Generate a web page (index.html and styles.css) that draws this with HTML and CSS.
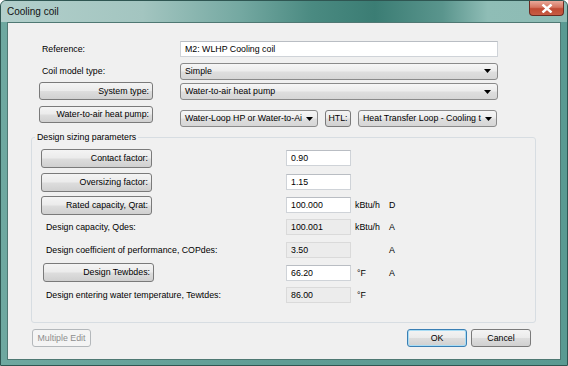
FILE: index.html
```html
<!DOCTYPE html>
<html>
<head>
	<title>Cooling coil</title>
	<link rel="stylesheet" href="styles.css">
</head>
<body>

<div class="ventana">
	<div class="titulo">
		<span class="titulo-texto">Cooling coil</span>
		<div class="cerrar">
			<svg width="12" height="9" viewBox="0 0 12 9"><path d="M1.5 0.5L10.5 8.5M10.5 0.5L1.5 8.5" stroke="#fff" stroke-width="2.4" fill="none"/></svg>
		</div>
	</div>

	<div class="cliente">
		<div class="fila fila-ref">
			<div class="col-izq"><span class="etiqueta">Reference:</span></div>
			<div class="campo campo-largo">M2: WLHP Cooling coil</div>
		</div>

		<div class="fila fila-modelo">
			<div class="col-izq"><span class="etiqueta">Coil model type:</span></div>
			<div class="combo combo-largo"><span class="combo-texto">Simple</span><svg class="flecha" width="7" height="4" viewBox="0 0 7 4"><path d="M0 0h7L3.5 4z"/></svg></div>
		</div>

		<div class="fila fila-sistema">
			<div class="col-izq"><div class="boton boton-etiqueta">System type:</div></div>
			<div class="combo combo-largo"><span class="combo-texto">Water-to-air heat pump</span><svg class="flecha" width="7" height="4" viewBox="0 0 7 4"><path d="M0 0h7L3.5 4z"/></svg></div>
		</div>

		<div class="fila fila-bomba">
			<div class="col-izq"><div class="boton boton-etiqueta">Water-to-air heat pump:</div></div>
			<div class="combo combo-corto"><span class="combo-texto">Water-Loop HP or Water-to-Ai</span><svg class="flecha" width="7" height="4" viewBox="0 0 7 4"><path d="M0 0h7L3.5 4z"/></svg></div>
			<div class="boton boton-htl">HTL:</div>
			<div class="combo combo-htl"><span class="combo-texto">Heat Transfer Loop - Cooling t</span><svg class="flecha" width="7" height="4" viewBox="0 0 7 4"><path d="M0 0h7L3.5 4z"/></svg></div>
		</div>

		<fieldset class="grupo">
			<legend>Design sizing parameters</legend>
			<div class="rejilla">
				<div class="celda"><div class="boton boton-param">Contact factor:</div></div>
				<div class="celda"><div class="campo campo-num">0.90</div></div>
				<div class="celda"></div>
				<div class="celda"></div>

				<div class="celda"><div class="boton boton-param">Oversizing factor:</div></div>
				<div class="celda"><div class="campo campo-num">1.15</div></div>
				<div class="celda"></div>
				<div class="celda"></div>

				<div class="celda"><div class="boton boton-param">Rated capacity, Qrat:</div></div>
				<div class="celda"><div class="campo campo-num">100.000</div></div>
				<div class="celda unidad">kBtu/h</div>
				<div class="celda">D</div>

				<div class="celda"><span class="etiqueta-param">Design capacity, Qdes:</span></div>
				<div class="celda"><div class="campo campo-num solo-lectura">100.001</div></div>
				<div class="celda unidad">kBtu/h</div>
				<div class="celda">A</div>

				<div class="celda"><span class="etiqueta-param">Design coefficient of performance, COPdes:</span></div>
				<div class="celda"><div class="campo campo-num solo-lectura">3.50</div></div>
				<div class="celda unidad"></div>
				<div class="celda">A</div>

				<div class="celda"><div class="boton boton-param boton-tewb">Design Tewbdes:</div></div>
				<div class="celda"><div class="campo campo-num">66.20</div></div>
				<div class="celda unidad grados">&deg;F</div>
				<div class="celda">A</div>

				<div class="celda"><span class="etiqueta-param">Design entering water temperature, Tewtdes:</span></div>
				<div class="celda"><div class="campo campo-num solo-lectura">86.00</div></div>
				<div class="celda unidad grados">&deg;F</div>
				<div class="celda"></div>
			</div>
		</fieldset>

		<div class="pie">
			<div class="boton boton-pie deshabilitado">Multiple Edit</div>
			<div class="pie-derecha">
				<div class="boton boton-pie boton-ok">OK</div>
				<div class="boton boton-pie">Cancel</div>
			</div>
		</div>
	</div>
</div>

</body>
</html>
```

FILE: styles.css
```css
html, body {
	margin: 0;
	padding: 0;
}

body {
	background-color: #ffffff;
	font-family: "Liberation Sans", Arial, sans-serif;
	font-size: 8.8px;
	color: #000;
}

div.ventana {
	width: 568px;
	height: 366px;
	box-sizing: border-box;
	border: 1px solid #2f5652;
	border-radius: 6px 6px 0 0;
	background: linear-gradient(90deg, #6ea8a0 0%, #5f9d95 50%, #5a9a92 100%);
	display: flex;
	flex-direction: column;
	overflow: hidden;
}

div.titulo {
	height: 21px;
	display: flex;
	align-items: flex-start;
	padding: 0 3px 0 6px;
	background: linear-gradient(90deg, #b2cfcb 0%, #a3c5c0 25%, #75a9a2 42%, #4a8a81 55%, #3b7d74 66%, #5a958d 78%, #8fbdb6 86%, #8dbbb4 100%);
}

span.titulo-texto {
	font-size: 10px;
	line-height: 21px;
	color: #111;
}

div.cerrar {
	margin-left: auto;
	width: 35px;
	height: 15px;
	box-sizing: border-box;
	border: 1px solid #6b2b22;
	border-top: none;
	border-radius: 0 0 4px 4px;
	background: linear-gradient(180deg, #e9a99a 0%, #d57560 45%, #c04a33 55%, #c75c44 100%);
	display: flex;
	align-items: center;
	justify-content: center;
}

div.cliente {
	margin: 0 6px;
	height: 338px;
	box-sizing: border-box;
	border: 1px solid #4f7873;
	background-color: #f0f0f0;
	padding-top: 18px;
}

div.fila {
	display: flex;
	align-items: center;
}

div.col-izq {
	width: 172px;
	flex-shrink: 0;
	padding-left: 34px;
	box-sizing: border-box;
}

div.fila-ref {
	height: 16px;
}

div.fila-modelo {
	height: 16px;
	margin-top: 6px;
}

div.fila-sistema {
	height: 18px;
	margin-top: 3px;
}

div.fila-sistema div.col-izq,
div.fila-bomba div.col-izq {
	padding-left: 31px;
}

div.fila-bomba {
	height: 21px;
	margin-top: 6px;
	align-items: flex-end;
}

div.fila-bomba div.col-izq {
	align-self: flex-start;
}

div.campo {
	height: 16px;
	box-sizing: border-box;
	border: 1px solid #cfd3d8;
	border-top-color: #b9bdc3;
	background-color: #fff;
	line-height: 14px;
	padding-left: 4px;
	white-space: nowrap;
	overflow: hidden;
}

div.campo-largo {
	width: 318px;
}

div.combo {
	height: 17px;
	box-sizing: border-box;
	border: 1px solid #8a8a8a;
	border-radius: 3px;
	background: linear-gradient(180deg, #f6f6f6 0%, #ececec 48%, #dedede 52%, #d6d6d6 100%);
	display: flex;
	align-items: center;
	padding: 0 6px 0 4px;
}

div.combo span.combo-texto {
	flex: 1;
	white-space: nowrap;
	line-height: 15px;
}

div.combo svg.flecha {
	flex-shrink: 0;
	margin-left: 4px;
}

div.combo-largo {
	width: 318px;
}

div.fila-sistema div.combo {
	margin-top: 1px;
}

div.combo-corto {
	width: 138px;
}

div.combo-htl {
	width: 139px;
}

div.boton {
	height: 18px;
	box-sizing: border-box;
	border: 1px solid #7a7a7a;
	border-radius: 3px;
	background: linear-gradient(180deg, #f4f4f4 0%, #ebebeb 48%, #dddddd 52%, #d0d0d0 100%);
	line-height: 16px;
	white-space: nowrap;
}

div.boton-etiqueta {
	width: 114px;
	text-align: right;
	padding-right: 3px;
}

div.fila-bomba div.boton-etiqueta {
	height: 17px;
	line-height: 15px;
}

div.boton-htl {
	width: 26px;
	height: 17px;
	line-height: 15px;
	text-align: center;
	margin: 0 7px 0 7px;
}

fieldset.grupo {
	margin: 5px 0 0 23px;
	width: 505px;
	box-sizing: border-box;
	border: 1px solid #d7dde2;
	border-radius: 3px;
	padding: 3px 0 16px 0;
}

fieldset.grupo legend {
	padding: 0 2px;
	margin-left: 3px;
	line-height: 11px;
	font-size: 8.8px;
}

div.rejilla {
	display: grid;
	grid-template-columns: 254px 65px 38px 30px;
	grid-template-rows: 24px 24px 22px 22px 23px 23px 22px;
}

div.rejilla div.celda {
	display: flex;
	align-items: center;
	white-space: nowrap;
}

div.rejilla div.unidad {
	padding-left: 4px;
}

div.rejilla div.grados {
	padding-left: 6px;
}

div.boton-param {
	width: 111px;
	height: 19px;
	line-height: 17px;
	margin-left: 9px;
	text-align: right;
	padding-right: 3px;
}

div.boton-tewb {
	margin-left: 11px;
}

span.etiqueta-param {
	padding-left: 14px;
}

div.campo-num {
	width: 65px;
}

div.solo-lectura {
	background-color: #ececec;
	border-color: #dadada;
}

div.pie {
	display: flex;
	margin-top: 6px;
	padding: 0 29px 0 24px;
}

div.pie-derecha {
	margin-left: auto;
	display: flex;
	gap: 4px;
}

div.boton-pie {
	width: 60px;
	height: 18px;
	text-align: center;
}

div.deshabilitado {
	width: 59px;
	color: #8d8d8d;
	border-color: #b4b8bb;
	background: #f4f4f4;
}

div.boton-ok {
	border-color: #3a7fb4;
	box-shadow: inset 0 0 0 1px #a8dcf4;
}
```
